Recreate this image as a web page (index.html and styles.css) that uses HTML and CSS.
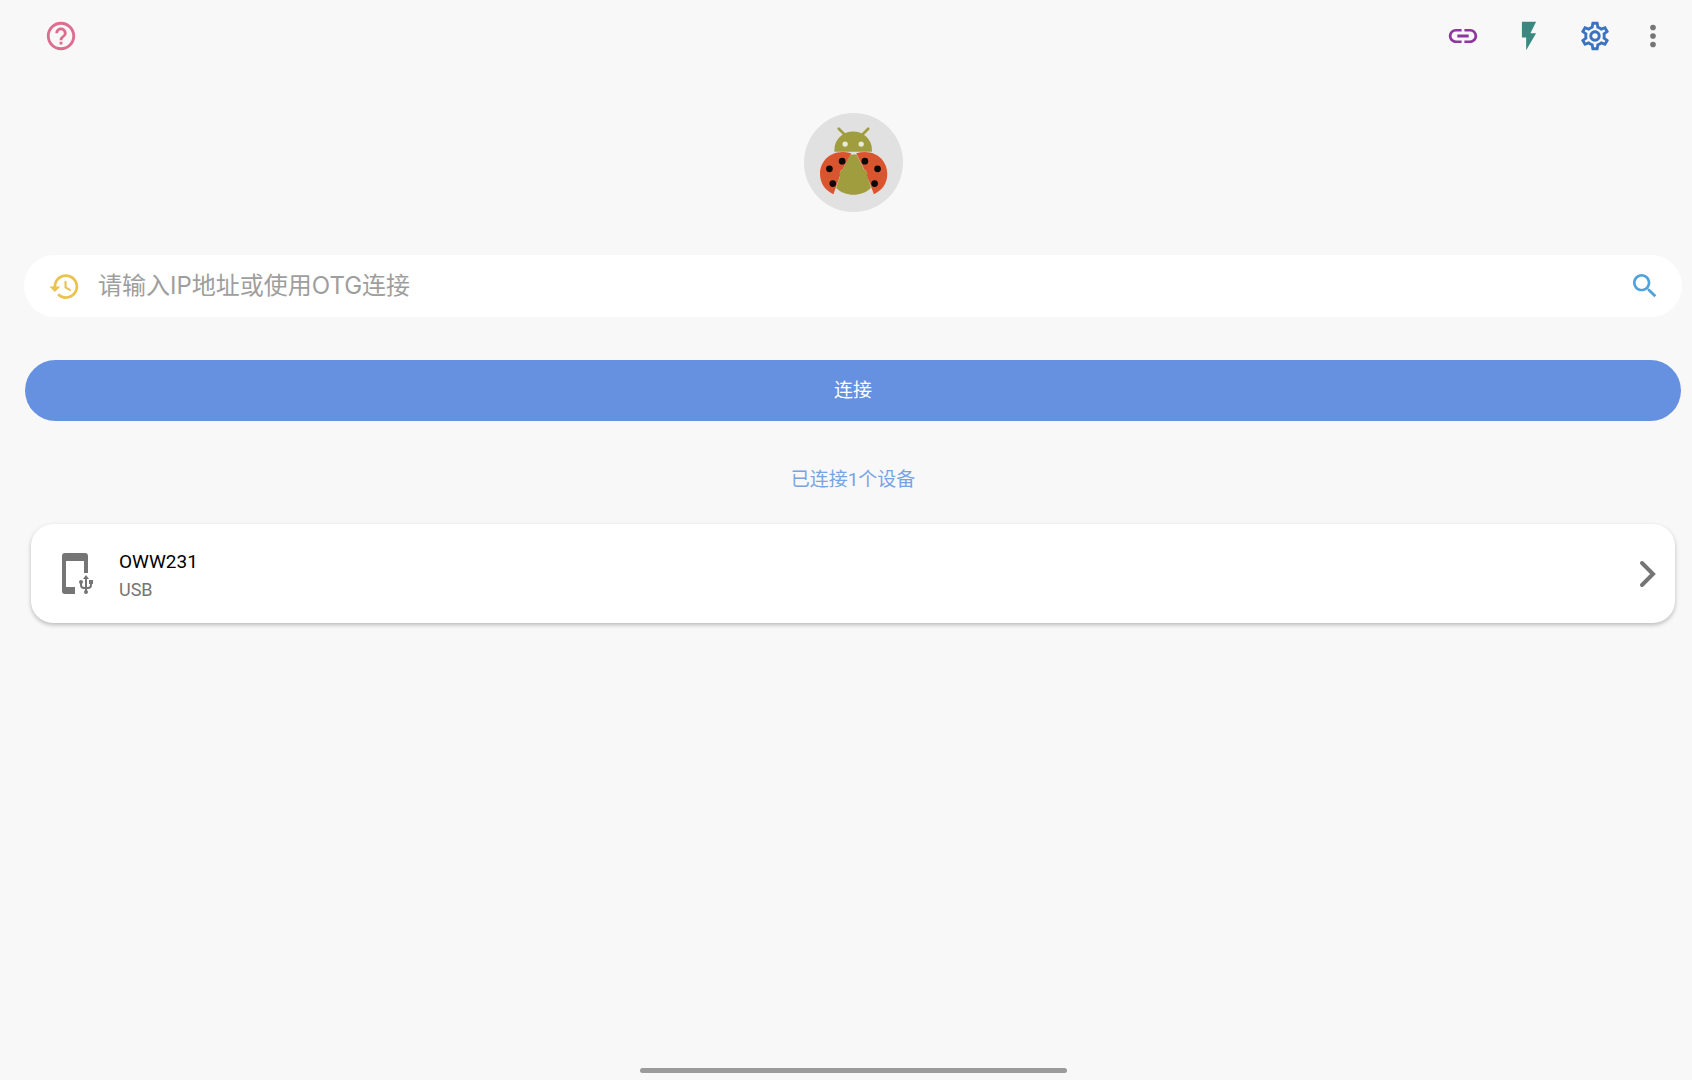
FILE: index.html
```
<!DOCTYPE html>
<html lang="zh-CN">
<head>
    <meta charset="UTF-8">
    <meta name="viewport" content="width=device-width, initial-scale=1.0">
    <title>连接</title>
    <link rel="stylesheet" href="styles.css">
</head>
<body>
    <header class="toolbar">
        <button type="button" class="tool help" aria-label="帮助">
            <svg viewBox="0 0 24 24"><path d="M11 18h2v-2h-2v2zm1-16C6.480 2 2 6.480 2 12s4.480 10 10 10 10-4.480 10-10S17.520 2 12 2zm0 18c-4.410 0-8-3.590-8-8s3.590-8 8-8 8 3.590 8 8-3.590 8-8 8zm0-14c-2.210 0-4 1.790-4 4h2c0-1.100.9-2 2-2s2 .9 2 2c0 2-3 1.750-3 5h2c0-2.250 3-2.500 3-5 0-2.210-1.790-4-4-4z"/></svg>
        </button>
        <button type="button" class="tool link" aria-label="链接">
            <svg viewBox="0 0 24 24"><path d="M3.900 12c0-1.710 1.390-3.100 3.100-3.100h4V7H7c-2.760 0-5 2.240-5 5s2.240 5 5 5h4v-1.900H7c-1.710 0-3.100-1.390-3.100-3.100zM8 13h8v-2H8v2zm9-6h-4v1.900h4c1.710 0 3.100 1.390 3.100 3.100s-1.390 3.100-3.100 3.100h-4V17h4c2.760 0 5-2.240 5-5s-2.240-5-5-5z"/></svg>
        </button>
        <button type="button" class="tool flash" aria-label="快速启动">
            <svg viewBox="0 0 24 24"><path d="M7 2v11h3v9l7-12h-4l4-8z"/></svg>
        </button>
        <button type="button" class="tool settings" aria-label="设置">
            <svg viewBox="0 0 24 24"><path d="M19.430 12.980c.04-.32.070-.64.070-.98 0-.34-.03-.66-.07-.98l2.110-1.650c.19-.15.240-.42.120-.64l-2-3.460c-.09-.16-.26-.25-.44-.25-.06 0-.12.010-.17.030l-2.490 1c-.52-.4-1.080-.73-1.690-.98l-.38-2.650C14.460 2.180 14.250 2 14 2h-4c-.25 0-.46.180-.49.420l-.38 2.650c-.61.250-1.170.590-1.690.980l-2.490-1c-.06-.02-.12-.03-.18-.03-.17 0-.34.090-.43.250l-2 3.460c-.13.220-.07.490.120.640l2.110 1.650c-.04.320-.07.650-.07.980s.03.660.070.980l-2.110 1.650c-.19.150-.24.420-.12.640l2 3.460c.09.160.260.250.440.250.06 0 .12-.01.170-.03l2.490-1c.52.400 1.080.730 1.690.980l.38 2.650c.03.240.240.420.490.420h4c.25 0 .46-.18.490-.42l.38-2.650c.61-.25 1.170-.59 1.690-.98l2.490 1c.06.020.120.030.180.030.17 0 .34-.09.430-.25l2-3.460c.12-.22.070-.49-.12-.64l-2.110-1.650zm-1.980-1.710c.04.310.050.520.050.730s-.02.430-.05.730l-.14 1.130.89.700 1.080.840-.7 1.210-1.270-.51-1.040-.42-.9.680c-.43.320-.84.560-1.250.730l-1.060.430-.16 1.130-.2 1.350h-1.400l-.19-1.350-.16-1.130-1.060-.43c-.43-.18-.83-.41-1.230-.71l-.91-.7-1.060.430-1.270.510-.7-1.210 1.080-.84.890-.7-.14-1.130c-.03-.31-.05-.54-.05-.74s.02-.43.050-.73l.14-1.130-.89-.7-1.080-.84.700-1.210 1.270.510 1.040.420.900-.68c.43-.32.840-.56 1.250-.73l1.060-.43.160-1.130.200-1.350h1.390l.19 1.350.160 1.130 1.060.430c.43.180.830.410 1.230.710l.91.700 1.060-.43 1.270-.51.700 1.210-1.070.850-.89.700.140 1.130zM12 8c-2.210 0-4 1.790-4 4s1.790 4 4 4 4-1.790 4-4-1.790-4-4-4zm0 6c-1.100 0-2-.9-2-2s.9-2 2-2 2 .9 2 2-.9 2-2 2z"/></svg>
        </button>
        <button type="button" class="tool more" aria-label="更多">
            <svg viewBox="0 0 24 24"><circle cx="12" cy="6" r="2"/><circle cx="12" cy="12" r="2"/><circle cx="12" cy="18" r="2"/></svg>
        </button>
    </header>

    <main>
        <svg class="logo" viewBox="43 38 296 296" aria-hidden="true">
            <circle cx="191" cy="186" r="148" fill="#e1e1e1"/>
            <g fill="#9f9d3d">
                <path d="M147 85l20 20M235 85l-20 20" stroke="#9f9d3d" stroke-width="8" stroke-linecap="round"/>
                <path d="M134 154v-7a56 54 0 0 1 112 0v7z"/>
                <path d="M181 162h19l22 45c8 3 12 10 10 17l11 38c-28 27-76 27-104 0l12-36c-3-8 0-15 7-18z"/>
            </g>
            <circle cx="166" cy="131" r="8" fill="#e8e8dc"/>
            <circle cx="214" cy="131" r="8" fill="#e8e8dc"/>
            <path d="M184 158c-60-15-93 24-93 62 0 28 14 49 40 61l20-56c-3-8 0-15 7-18z" fill="#d9552f"/>
            <path d="M199 158c60-15 93 24 93 62 0 28-14 49-40 61l-21-56c3-8-1-15-8-18z" fill="#d9552f"/>
            <g fill="#0c0805">
                <circle cx="157" cy="182" r="10"/><circle cx="119" cy="205" r="10"/><circle cx="129" cy="249" r="10"/>
                <circle cx="225" cy="182" r="10"/><circle cx="263" cy="205" r="10"/><circle cx="254" cy="249" r="10"/>
            </g>
        </svg>

        <form id="connect" class="search">
            <button type="button" class="history" aria-label="历史记录">
                <svg viewBox="0 0 24 24"><path d="M13 3c-4.970 0-9 4.030-9 9H1l3.890 3.890.07.140L9 12H6c0-3.870 3.130-7 7-7s7 3.130 7 7-3.130 7-7 7c-1.930 0-3.680-.79-4.940-2.060l-1.420 1.420C8.270 19.990 10.510 21 13 21c4.970 0 9-4.030 9-9s-4.030-9-9-9zm-1 5v5l4.280 2.540.72-1.210-3.500-2.080V8H12z"/></svg>
            </button>
            <input type="text" name="ip" placeholder="请输入IP地址或使用OTG连接" aria-label="IP地址">
            <button type="button" class="find" aria-label="搜索">
                <svg viewBox="0 0 24 24"><path d="M15.500 14h-.79l-.28-.27C15.410 12.590 16 11.110 16 9.500 16 5.910 13.090 3 9.500 3S3 5.910 3 9.500 5.910 16 9.500 16c1.610 0 3.090-.59 4.230-1.570l.27.280v.79l5 4.990L20.490 19l-4.990-5zm-6 0C7.010 14 5 11.990 5 9.500S7.010 5 9.500 5 14 7.010 14 9.500 11.990 14 9.500 14z"/></svg>
            </button>
        </form>
        <button type="submit" form="connect" class="connect">连接</button>

        <p class="status">已连接1个设备</p>

        <a href="#" class="device">
            <svg class="phone" viewBox="0 0 32 42">
                <path d="M3 0h20a3 3 0 0 1 3 3v17h-4V8H4v26h9v7H3a3 3 0 0 1-3-3V3a3 3 0 0 1 3-3z"/>
                <path d="M24 25v13M19 29v3q0 3 3 3h4q3 0 3-3v-3" fill="none" stroke="#757575" stroke-width="2"/>
                <path d="M24 22l3 4h-6zM27 27h4v4h-4z"/>
                <circle cx="19" cy="29" r="2"/><circle cx="24" cy="39" r="2"/>
            </svg>
            <span class="info">
                <span class="name">OWW231</span>
                <span class="type">USB</span>
            </span>
            <svg class="arrow" viewBox="0 0 18 28"><path d="M3 3l11 11L3 25"/></svg>
        </a>
    </main>

    <div class="home-bar"></div>
</body>
</html>
```

FILE: styles.css
```
* {
    box-sizing: border-box;
}
body {
    display: flex;
    flex-direction: column;
    min-height: 100vh;
    margin: 0;
    padding: 0 10px 7px 24px;
    background-color: #f8f8f8;
    font-family: Roboto, "Noto Sans CJK SC", sans-serif;
}
button {
    border: none;
    padding: 0;
    background: none;
    cursor: pointer;
}
svg {
    display: block;
    flex: none;
    fill: currentColor;
}
.toolbar {
    display: flex;
    align-items: center;
    height: 71px;
    padding: 0 4px;
}
.tool {
    display: flex;
    justify-content: center;
    width: 66px;
}
.tool svg {
    width: 34px;
    height: 34px;
}
.help {
    margin-right: auto;
    color: #dc6d8e;
}
.link {
    color: #8e36a0;
}
.flash {
    color: #3b8880;
}
.settings {
    color: #3c73c0;
}
.more {
    width: 50px;
    color: #757575;
}
main {
    display: flex;
    flex-direction: column;
}
.logo {
    width: 99px;
    height: 99px;
    margin: 42px auto 43px;
}
.search {
    display: flex;
    align-items: center;
    height: 62px;
    padding: 0 21px 0 24px;
    border-radius: 31px;
    background-color: #fff;
}
.search input {
    flex: 1;
    min-width: 0;
    height: 62px;
    padding: 0 17px 2px;
    border: none;
    outline: none;
    background: none;
    font-family: Inter, "Noto Sans CJK SC", sans-serif;
    font-size: 24px;
}
.search input::placeholder {
    color: #9e9e9e;
    opacity: 1;
}
.history {
    color: #eac24c;
}
.find {
    color: #52a2db;
}
.history svg {
    width: 33px;
    height: 33px;
}
.find svg {
    width: 32px;
    height: 32px;
}
.connect {
    height: 61px;
    margin: 43px 1px 0;
    padding-bottom: 4px;
    border-radius: 31px;
    background-color: #6691e0;
    color: #fff;
    font-family: "Noto Sans CJK SC", sans-serif;
    font-size: 19px;
}
.status {
    margin: 45px 0 30px;
    color: #78a3e3;
    font-size: 19px;
    line-height: 28px;
    text-align: center;
}
.device {
    display: flex;
    align-items: center;
    height: 99px;
    margin: 0 7px;
    padding: 0 18px 0 31px;
    border-radius: 22px;
    background-color: #fff;
    box-shadow: 0 2px 4px rgba(0, 0, 0, 0.25);
    color: #757575;
    text-decoration: none;
}
.phone {
    width: 32px;
    height: 42px;
}
.info {
    display: flex;
    flex-direction: column;
    flex: 1;
    margin-left: 25px;
    padding-top: 4px;
    line-height: 28px;
}
.name {
    color: #000;
    font-size: 19px;
}
.type {
    font-size: 18px;
}
.arrow {
    width: 18px;
    height: 28px;
    fill: none;
    stroke: #757575;
    stroke-width: 4;
    stroke-linecap: round;
}
.home-bar {
    align-self: center;
    width: 427px;
    max-width: 60%;
    height: 5px;
    margin-top: auto;
    border-radius: 3px;
    background-color: #9b9b9b;
}
```
